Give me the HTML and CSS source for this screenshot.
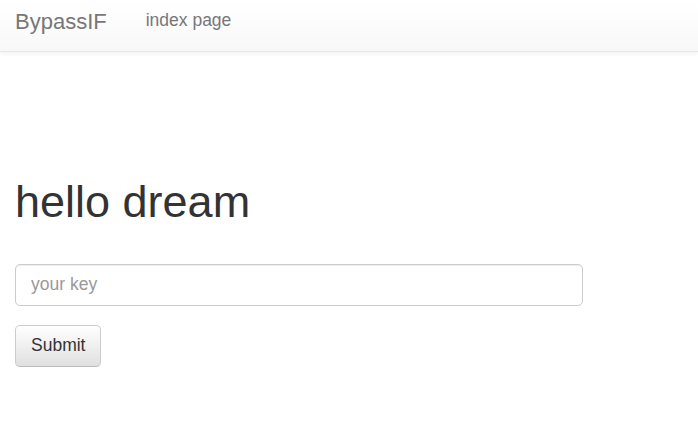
FILE: index.html
```html
<!DOCTYPE html>
<html>
<head>
<meta charset="utf-8">
<link rel="stylesheet" href="styles.css">
</head>
<body>
<nav class="navbar">
  <a class="brand" href="#">BypassIF</a>
  <a class="nav-link" href="#">index page</a>
</nav>
<main class="container">
  <h1 class="title">hello dream</h1>
  <form class="form">
    <input class="field" type="text" placeholder="your key">
    <button class="btn" type="button">Submit</button>
  </form>
</main>
</body>
</html>
```
FILE: styles.css
```css
html, body {
  margin: 0;
  padding: 0;
  background: #fff;
  font-family: "Liberation Sans", Arial, sans-serif;
  color: #333;
}
.navbar {
  height: 52px;
  box-sizing: border-box;
  display: flex;
  align-items: center;
  padding-left: 15px;
  background: linear-gradient(to bottom, #ffffff 0%, #f8f8f8 100%);
  border-bottom: 1px solid #e7e7e7;
  box-shadow: inset 0 1px 0 rgba(255,255,255,.15), 0 1px 5px rgba(0,0,0,.075);
}
.brand {
  font-size: 22px;
  color: #777;
  text-decoration: none;
  margin-top: -8px;
}
.nav-link {
  margin-left: 39px;
  font-size: 17.5px;
  color: #777;
  text-decoration: none;
  margin-top: -10px;
}
.container {
  padding: 0 15px;
}
.title {
  margin: 125px 0 0;
  font-size: 45px;
  line-height: 1.1;
  font-weight: 500;
  color: #333;
}
.form {
  margin-top: 37px;
  display: flex;
  flex-direction: column;
  align-items: flex-start;
}
.field {
  width: 568px;
  height: 42px;
  box-sizing: border-box;
  padding: 0 15px;
  font-family: inherit;
  font-size: 17.5px;
  color: #555;
  border: 1px solid #ccc;
  border-radius: 5px;
  box-shadow: inset 0 1px 1px rgba(0,0,0,.075);
  outline: none;
}
.field::placeholder {
  color: #999;
}
.btn {
  margin-top: 19px;
  height: 42px;
  box-sizing: border-box;
  padding: 0 15px;
  font-family: inherit;
  font-size: 17.5px;
  color: #333;
  background: linear-gradient(to bottom, #ffffff 0%, #e0e0e0 100%);
  border: 1px solid #ccc;
  border-color: #ccc #ccc #bbb;
  border-radius: 5px;
  box-shadow: inset 0 1px 0 rgba(255,255,255,.15), 0 1px 1px rgba(0,0,0,.075);
}
```
